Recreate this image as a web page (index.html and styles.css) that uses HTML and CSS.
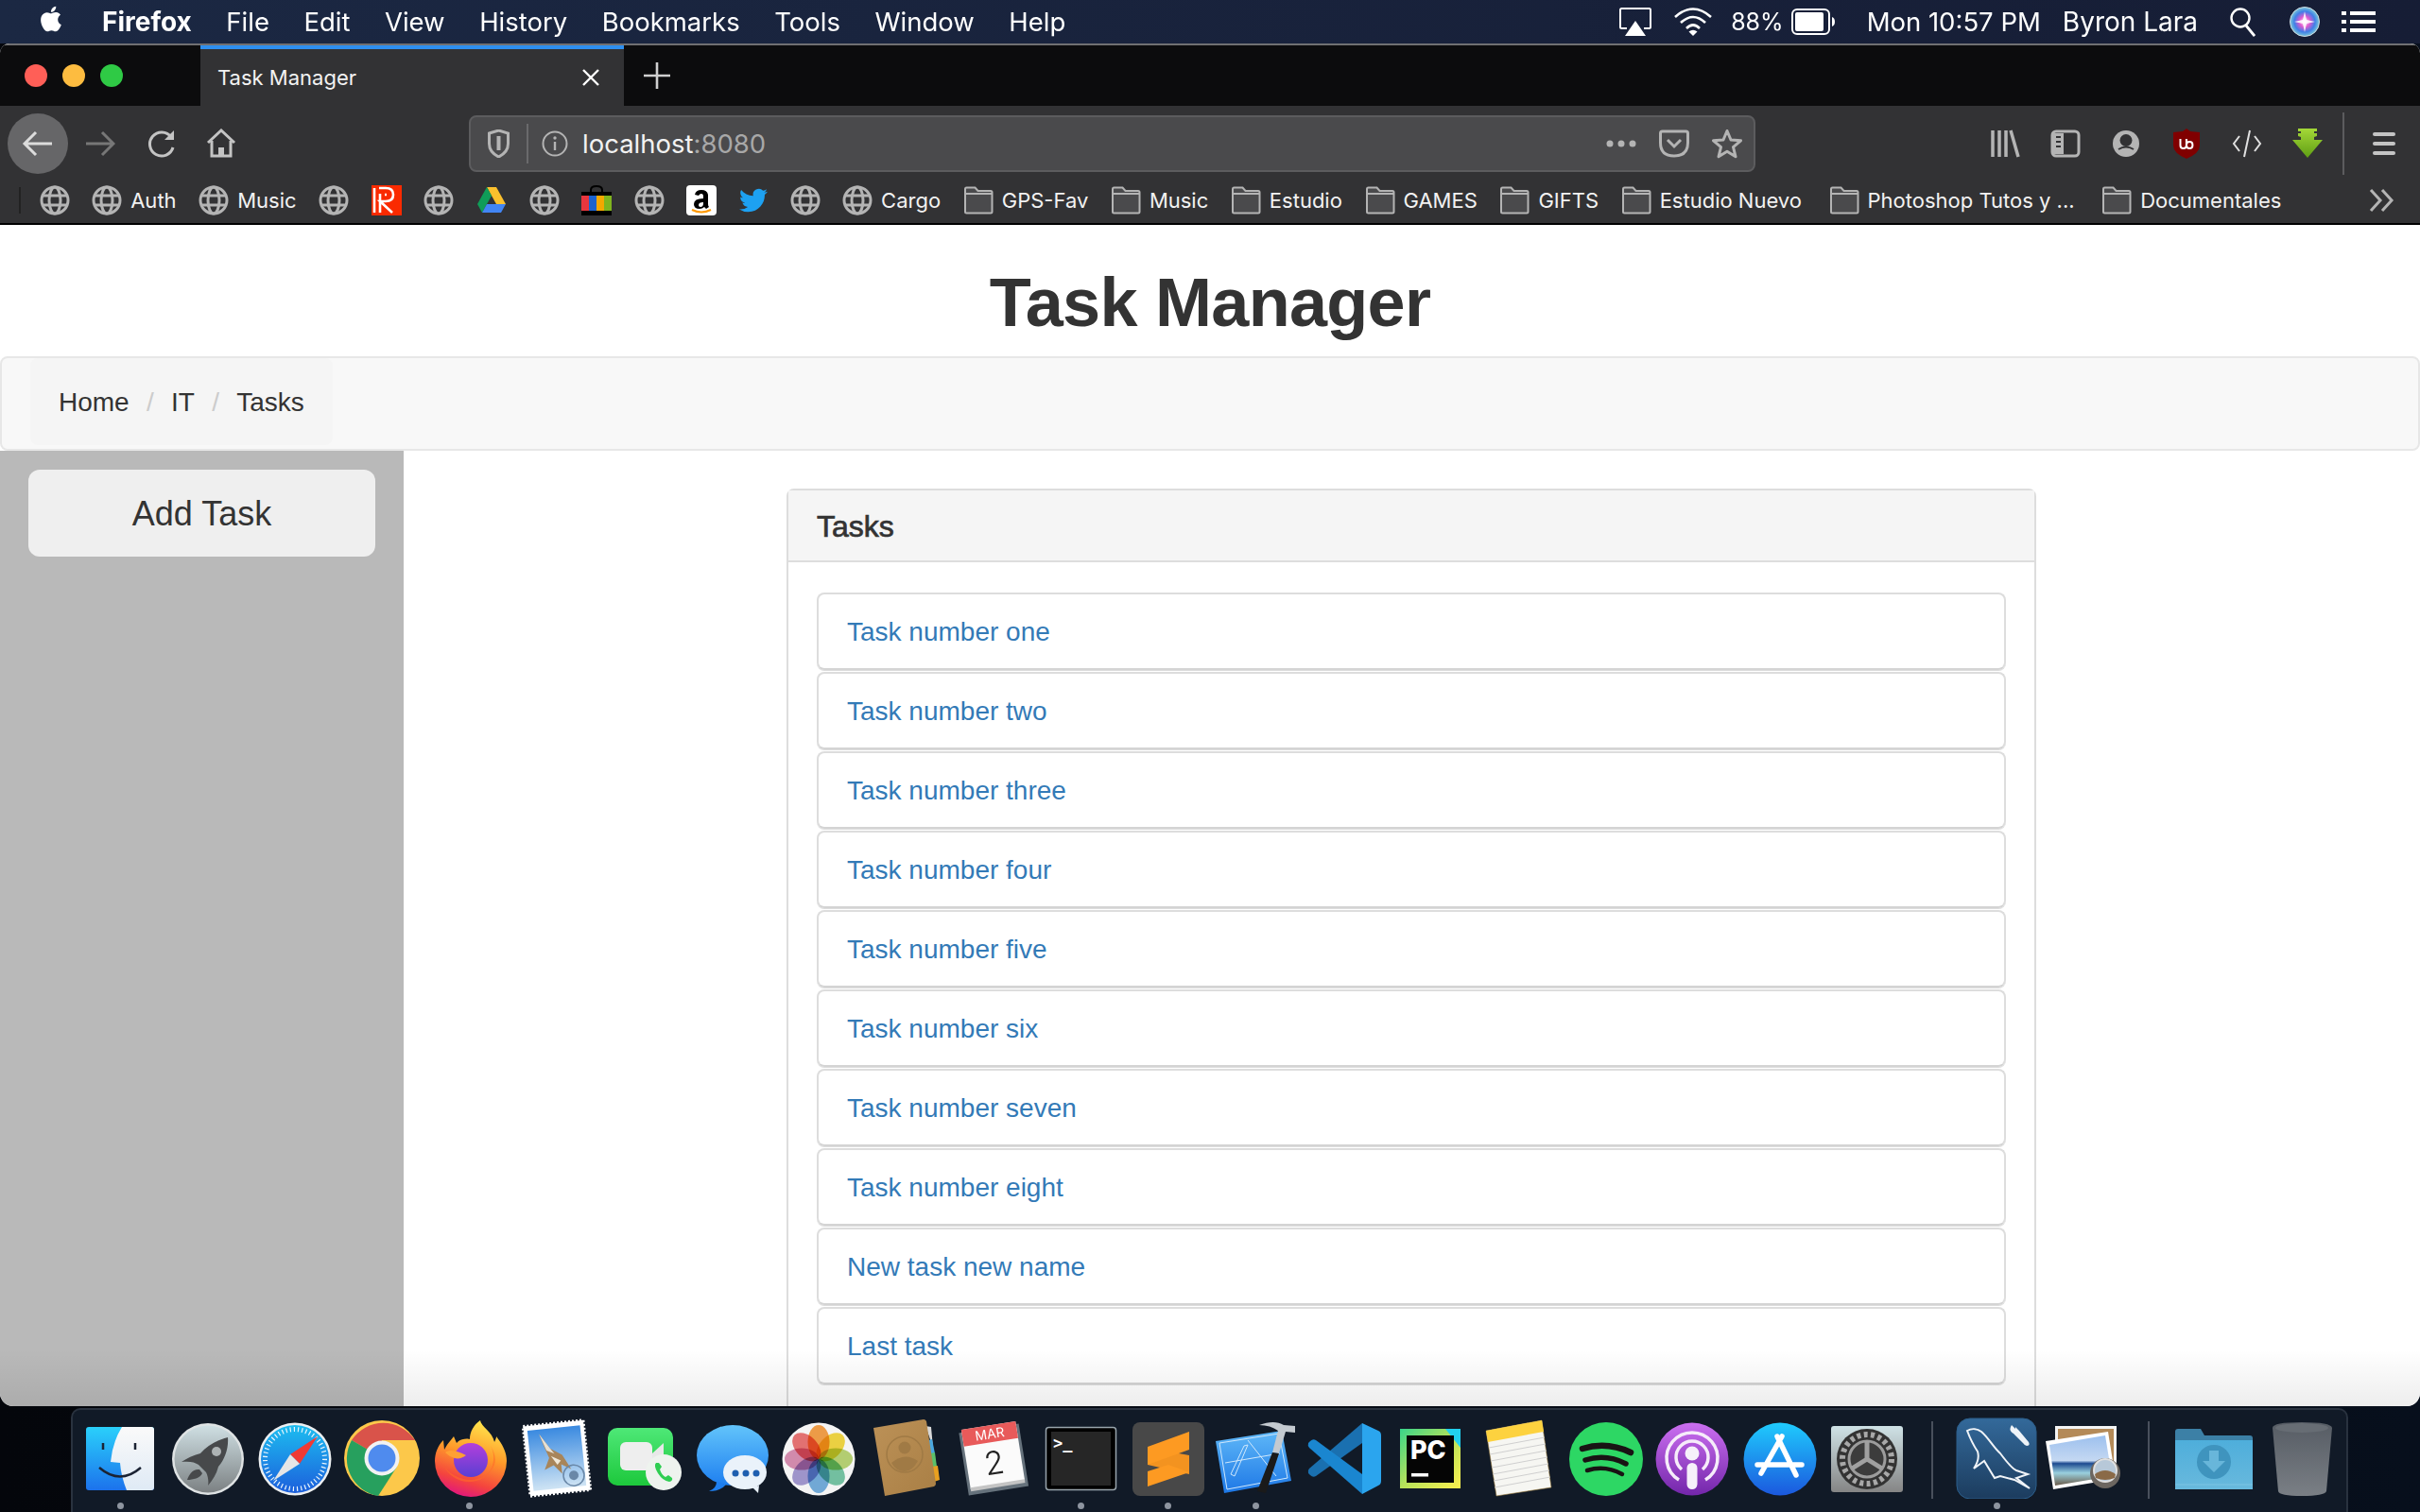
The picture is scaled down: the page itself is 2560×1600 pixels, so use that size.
FILE: index.html
```html
<!DOCTYPE html>
<html lang="en">
<head>
<meta charset="utf-8">
<title>Task Manager</title>
<link rel="stylesheet" href="styles.css">
</head>
<body>
<svg class="defs" aria-hidden="true">
  <defs>
    <symbol id="globe" viewBox="0 0 32 32"><g fill="none" stroke="#b4b4b4" stroke-width="3"><circle cx="16" cy="16" r="14"/><ellipse cx="16" cy="16" rx="6" ry="14"/><path d="M3 11h26M3 21h26"/></g></symbol>
    <symbol id="folder" viewBox="0 0 32 32"><path d="M2 4q0-1.500 1.500-1.500h9l3 3.500H29q1.500 0 1.500 1.500V28q0 1.500-1.500 1.500H3.500Q2 29.500 2 28Z" fill="#4a4a4c" stroke="#b4b4b4" stroke-width="2"/><path d="M2 9h28.500" stroke="#b4b4b4" stroke-width="2"/></symbol>
    <linearGradient id="gFinder" x1="0" y1="0" x2="0" y2="1"><stop offset="0" stop-color="#2ad0fb"/><stop offset="1" stop-color="#1c72ec"/></linearGradient>
    <linearGradient id="gFinder2" x1="0" y1="0" x2="0" y2="1"><stop offset="0" stop-color="#fafafa"/><stop offset="1" stop-color="#dfeaf5"/></linearGradient>
    <linearGradient id="gRocket" x1="0" y1="0" x2="0" y2="1"><stop offset="0" stop-color="#cfdfe3"/><stop offset="1" stop-color="#7c8183"/></linearGradient>
    <linearGradient id="gSafari" x1="0" y1="0" x2="0" y2="1"><stop offset="0" stop-color="#1dbdf0"/><stop offset="1" stop-color="#1c5fdc"/></linearGradient>
    <linearGradient id="gFox" x1="0.7" y1="0" x2="0.4" y2="1"><stop offset="0" stop-color="#ffe94e"/><stop offset=".45" stop-color="#ff9a2a"/><stop offset=".8" stop-color="#f4443e"/><stop offset="1" stop-color="#e2187c"/></linearGradient>
    <linearGradient id="gFoxIn" x1="0.5" y1="0" x2="0.5" y2="1"><stop offset="0" stop-color="#b33fdc"/><stop offset="1" stop-color="#5b3fd2"/></linearGradient>
    <linearGradient id="gSky" x1="0" y1="0" x2="0" y2="1"><stop offset="0" stop-color="#3a8ae0"/><stop offset="1" stop-color="#cfe4f4"/></linearGradient>
    <linearGradient id="gFace" x1="0" y1="0" x2="0" y2="1"><stop offset="0" stop-color="#4ee877"/><stop offset="1" stop-color="#1dc83c"/></linearGradient>
    <linearGradient id="gMsg" x1="0" y1="0" x2="0" y2="1"><stop offset="0" stop-color="#62c4fb"/><stop offset="1" stop-color="#1e7ff0"/></linearGradient>
    <linearGradient id="gBook" x1="0" y1="0" x2="1" y2="1"><stop offset="0" stop-color="#bc9157"/><stop offset="1" stop-color="#a97f45"/></linearGradient>
    <linearGradient id="gXcode" x1="0" y1="0" x2="0" y2="1"><stop offset="0" stop-color="#5fb8f8"/><stop offset="1" stop-color="#1e78e6"/></linearGradient>
    <linearGradient id="gPod" x1="0" y1="0" x2="0" y2="1"><stop offset="0" stop-color="#cb6ff0"/><stop offset="1" stop-color="#7326aa"/></linearGradient>
    <linearGradient id="gStore" x1="0" y1="0" x2="0" y2="1"><stop offset="0" stop-color="#1fcbfd"/><stop offset="1" stop-color="#1b58de"/></linearGradient>
    <linearGradient id="gPrefs" x1="0" y1="0" x2="0" y2="1"><stop offset="0" stop-color="#cfe2e6"/><stop offset="1" stop-color="#858585"/></linearGradient>
    <linearGradient id="gSql" x1="0" y1="0" x2="0" y2="1"><stop offset="0" stop-color="#33699a"/><stop offset="1" stop-color="#1c3c5e"/></linearGradient>
    <linearGradient id="gSea" x1="0" y1="0" x2="0" y2="1"><stop offset="0" stop-color="#9cc0ee"/><stop offset=".5" stop-color="#c4d8f2"/><stop offset=".56" stop-color="#1d4a90"/><stop offset=".75" stop-color="#9ad0de"/><stop offset="1" stop-color="#6a5a48"/></linearGradient>
    <linearGradient id="gFolder" x1="0" y1="0" x2="0" y2="1"><stop offset="0" stop-color="#4eaedb"/><stop offset="1" stop-color="#68b9dd"/></linearGradient>
    <linearGradient id="gTrash" x1="0" y1="0" x2="0" y2="1"><stop offset="0" stop-color="#565c64"/><stop offset="1" stop-color="#7a7f85"/></linearGradient>
    <linearGradient id="gArrow" x1="0" y1="0" x2="0" y2="1"><stop offset="0" stop-color="#a4d838"/><stop offset="1" stop-color="#5f9e14"/></linearGradient>
    <linearGradient id="gPy" x1="0" y1="0" x2="1" y2="1"><stop offset="0" stop-color="#38d58a"/><stop offset=".5" stop-color="#b6e25a"/><stop offset="1" stop-color="#fdf04e"/></linearGradient>
    <radialGradient id="gSiri"><stop offset="0" stop-color="#ffffff"/><stop offset=".35" stop-color="#e05ad0"/><stop offset=".7" stop-color="#3f7fe8"/><stop offset="1" stop-color="#7ac8d8"/></radialGradient>
  </defs>
</svg>

<header class="menubar">
  <svg class="apple" viewBox="0 0 24 24"><path fill="#fff" d="M18.710 19.500c-.83 1.240-1.710 2.450-3.050 2.470-1.340.03-1.770-.79-3.290-.79-1.530 0-2 .77-3.270.82-1.310.05-2.300-1.320-3.140-2.530C4.250 17 2.940 12.450 4.700 9.390c.87-1.520 2.430-2.480 4.120-2.510 1.280-.02 2.500.87 3.290.87.78 0 2.260-1.070 3.800-.91.65.03 2.470.26 3.640 1.980-.09.06-2.170 1.280-2.150 3.810.03 3.020 2.650 4.030 2.680 4.040-.03.07-.42 1.440-1.380 2.830M13 3.500c.73-.83 1.940-1.460 2.940-1.500.13 1.170-.34 2.350-1.040 3.190-.69.85-1.830 1.510-2.950 1.420-.15-1.150.41-2.350 1.050-3.110z"/></svg>
  <nav class="appmenu">
    <span class="appname">Firefox</span><span>File</span><span>Edit</span><span>View</span><span>History</span><span>Bookmarks</span><span>Tools</span><span>Window</span><span>Help</span>
  </nav>
  <div class="status">
    <svg class="st-airplay" width="36" height="32" viewBox="0 0 36 32"><path d="M9 23H3.500Q2 23 2 21.500V3.500Q2 2 3.500 2h29Q34 2 34 3.500v18q0 1.500-1.500 1.500H27" fill="none" stroke="#fff" stroke-width="2"/><path d="M18 15 29 31H7Z" fill="#fff"/></svg>
    <svg class="st-wifi" width="42" height="32" viewBox="0 0 42 32"><g fill="none" stroke="#fff" stroke-width="2.600"><path d="M2 11Q21-6 40 11"/><path d="M8 17Q21 5 34 17"/><path d="M14 23Q21 16 28 23"/></g><path d="M21 31 16.500 26.500Q21 23 25.500 26.500Z" fill="#fff"/></svg>
    <span class="st-pct">88%</span>
    <svg class="st-batt" width="46" height="28" viewBox="0 0 46 28"><rect x="1" y="1" width="39" height="26" rx="5" fill="none" stroke="#fff" stroke-width="2"/><rect x="4" y="4" width="30" height="20" rx="2" fill="#fff"/><path d="M43 9q3 1 3 5t-3 5Z" fill="#fff"/></svg>
    <span class="st-time">Mon 10:57 PM</span>
    <span class="st-name">Byron Lara</span>
    <svg class="st-search" width="28" height="32" viewBox="0 0 28 32"><circle cx="12" cy="12" r="9.500" fill="none" stroke="#fff" stroke-width="2.400"/><path d="M18 20 27 31" stroke="#fff" stroke-width="2.800"/></svg>
    <svg class="st-siri" width="32" height="32" viewBox="0 0 32 32"><circle cx="16" cy="16" r="15.500" fill="url(#gSiri)" stroke="#cfd8e0" stroke-width="1"/><path d="M16 5 18 14 27 16 18 18 16 27 14 18 5 16 14 14Z" fill="#fff" opacity=".85"/></svg>
    <svg width="36" height="24" viewBox="0 0 36 24"><g fill="#fff"><rect x="0" y="1" width="5" height="4"/><rect x="9" y="1" width="27" height="4"/><rect x="0" y="10" width="5" height="4"/><rect x="9" y="10" width="27" height="4"/><rect x="0" y="19" width="5" height="4"/><rect x="9" y="19" width="27" height="4"/></g></svg>
  </div>
</header>

<div class="window">
  <div class="tabstrip">
    <div class="lights"><i class="light red"></i><i class="light amber"></i><i class="light green"></i></div>
    <div class="tab"><span class="tab-title">Task Manager</span>
      <svg width="20" height="20" viewBox="0 0 20 20"><path d="M2 2 18 18M18 2 2 18" stroke="#fff" stroke-width="2.400"/></svg>
    </div>
    <svg class="newtab" width="28" height="28" viewBox="0 0 28 28"><path d="M14 0V28M0 14H28" stroke="#cfcfcf" stroke-width="2.600"/></svg>
  </div>

  <div class="navrow">
    <div class="backbtn"><svg width="34" height="30" viewBox="0 0 34 30"><path d="M32 15H4M15 3 3 15 15 27" fill="none" stroke="#dcdcdc" stroke-width="3"/></svg></div>
    <svg class="nav-fwd" width="32" height="30" viewBox="0 0 32 30"><path d="M1 15H29M18 3 30 15 18 27" fill="none" stroke="#777" stroke-width="3"/></svg>
    <svg class="nav-reload" width="30" height="30" viewBox="0 0 30 30"><path d="M25 8A12.500 12.500 0 1 0 27 19" fill="none" stroke="#c4c4c4" stroke-width="3"/><path d="M28 1V11H18Z" fill="#c4c4c4"/></svg>
    <svg class="nav-home" width="32" height="32" viewBox="0 0 32 32"><path d="M2 15 16 2 30 15M6 13V29H26V13" fill="none" stroke="#c4c4c4" stroke-width="3"/><path d="M13 30V20h6V30Z" fill="#c4c4c4"/></svg>
    <div class="urlbar">
      <svg width="23" height="30" viewBox="0 0 23 30"><path d="M1.500 4 11.500 1l10 3v11q0 9-10 14-10-5-10-14Z" fill="none" stroke="#b4b4b4" stroke-width="3"/><path d="M11.500 7v15" stroke="#b4b4b4" stroke-width="4"/></svg>
      <i class="url-sep"></i>
      <svg width="28" height="28" viewBox="0 0 28 28"><circle cx="14" cy="14" r="12.500" fill="none" stroke="#b4b4b4" stroke-width="2"/><path d="M14 12v9" stroke="#b4b4b4" stroke-width="2.400"/><circle cx="14" cy="8" r="1.700" fill="#b4b4b4"/></svg>
      <span class="url-text">localhost<span class="url-port">:8080</span></span>
      <div class="url-actions">
        <svg width="32" height="8" viewBox="0 0 32 8"><g fill="#b4b4b4"><circle cx="4" cy="4" r="3.500"/><circle cx="16" cy="4" r="3.500"/><circle cx="28" cy="4" r="3.500"/></g></svg>
        <svg width="32" height="30" viewBox="0 0 32 30"><path d="M3.500 2h25Q30.500 2 30.500 4v10q0 14-14.500 14T1.500 14V4Q1.500 2 3.500 2Z" fill="none" stroke="#b4b4b4" stroke-width="3"/><path d="M9 11l7 7 7-7" fill="none" stroke="#b4b4b4" stroke-width="3"/></svg>
        <svg width="32" height="32" viewBox="0 0 32 32"><path d="M16 2.500 20 12l10.500.8-8 6.800 2.500 10.200L16 24.300 7 29.800l2.500-10.200-8-6.800L12 12Z" fill="none" stroke="#b4b4b4" stroke-width="3" stroke-linejoin="round"/></svg>
      </div>
    </div>
    <div class="tools">
      <svg width="32" height="30" viewBox="0 0 32 30"><path d="M3 1V29M10 1V29M17 1V29M22 1 30 29" stroke="#b4b4b4" stroke-width="3.500" fill="none"/></svg>
      <svg width="32" height="30" viewBox="0 0 32 30"><rect x="2" y="2" width="28" height="26" rx="4" fill="none" stroke="#b4b4b4" stroke-width="3"/><path d="M2 4h12v22H2Z" fill="#b4b4b4"/><path d="M6 8h5M6 13h5M6 18h5" stroke="#323234" stroke-width="2"/></svg>
      <svg width="32" height="32" viewBox="0 0 32 32"><circle cx="16" cy="16" r="14" fill="#b4b4b4"/><circle cx="16" cy="12.500" r="6.500" fill="#323234"/><path d="M5 24q11-10 22 0-5 5-11 5T5 24Z" fill="#b4b4b4"/><path d="M8 22q8-5 16 0" fill="none" stroke="#323234" stroke-width="2"/></svg>
      <svg width="32" height="32" viewBox="0 0 32 32"><path d="M16 0 20 3l10 1v14q0 8-14 14Q2 26 2 18V4l10-1Z" fill="#800000"/><path d="M9.500 11v7q0 3 3.200 3t3.200-3v-7M16 18q0 3 3.200 3t3.200-3v-1q0-3-3.200-3T16 17" fill="none" stroke="#fff" stroke-width="2"/></svg>
      <svg width="32" height="30" viewBox="0 0 32 30"><path d="M8 7 2 15l6 8M24 7l6 8-6 8M19 1l-6 28" fill="none" stroke="#e0e0e0" stroke-width="2"/></svg>
      <svg width="32" height="32" viewBox="0 0 32 32"><path d="M6 0h20v3h-3v2h3v3l-3 1v3h9L16 31 0 12h9V9L6 8V5h3V3H6Z" fill="url(#gArrow)"/></svg>
    </div>
    <i class="tool-sep"></i>
    <svg class="burger" width="24" height="24" viewBox="0 0 24 24"><g fill="#c4c4c4"><rect y="0" width="24" height="4" rx="2"/><rect y="10" width="24" height="4" rx="2"/><rect y="20" width="24" height="4" rx="2"/></g></svg>
  </div>

  <div class="bookmarks">
    <i class="bm-sep"></i>
    <div class="bm"><svg class="ic"><use href="#globe"/></svg></div>
    <div class="bm"><svg class="ic"><use href="#globe"/></svg><span>Auth</span></div>
    <div class="bm"><svg class="ic"><use href="#globe"/></svg><span>Music</span></div>
    <div class="bm"><svg class="ic"><use href="#globe"/></svg></div>
    <div class="bm"><svg class="ic" viewBox="0 0 32 32"><rect width="32" height="32" fill="#fa2a00"/><path d="M3 3v26M8 3h7q8 0 8 7t-8 7H9l13 12M14 10h2M9 9v20" fill="none" stroke="#fff" stroke-width="2.600"/></svg></div>
    <div class="bm"><svg class="ic"><use href="#globe"/></svg></div>
    <div class="bm"><svg class="ic" viewBox="0 0 32 32"><path d="M11 2h10l10 18H21Z" fill="#fbc02d"/><path d="M11 2 1 20l5 9 10-18Z" fill="#0f9d58"/><path d="M6 29h20l5-9H11Z" fill="#4285f4"/></svg></div>
    <div class="bm"><svg class="ic"><use href="#globe"/></svg></div>
    <div class="bm"><svg class="ic" viewBox="0 0 32 32"><path d="M10 8V5q0-4 6-4t6 4v3" fill="none" stroke="#000" stroke-width="2"/><rect y="7" width="32" height="25" fill="#000"/><rect y="11" width="8" height="16" fill="#e8363e"/><rect x="8" y="11" width="8" height="16" fill="#1b63d0"/><rect x="16" y="11" width="8" height="16" fill="#f4a800"/><rect x="24" y="11" width="8" height="16" fill="#7fb41e"/></svg></div>
    <div class="bm"><svg class="ic"><use href="#globe"/></svg></div>
    <div class="bm"><svg class="ic" viewBox="0 0 32 32"><rect width="32" height="32" rx="4" fill="#fff"/><path d="M9 10q1-5 7-5t7 5v10q0 2 1 3l-3 2-2-2q-2 2-5 2-6 0-6-5 0-6 10-6v-2q0-3-2-3t-3 2Zm9 8q-5 0-5 3 0 2 2 2 3 0 3-4Z" fill="#000"/><path d="M6 26q10 5 20 0" fill="none" stroke="#f90" stroke-width="2"/></svg></div>
    <div class="bm"><svg class="ic ic-tw" viewBox="0 0 24 24"><path fill="#1da1f2" d="M23.950 4.570a10 10 0 0 1-2.820.77 4.960 4.960 0 0 0 2.160-2.720c-.95.550-2 .96-3.130 1.190a4.920 4.920 0 0 0-8.380 4.480C7.690 8.090 4.070 6.130 1.640 3.160a4.820 4.820 0 0 0-.67 2.480c0 1.710.87 3.210 2.190 4.100a4.900 4.900 0 0 1-2.230-.62v.06a4.920 4.920 0 0 0 3.950 4.830 5 5 0 0 1-2.210.08 4.940 4.940 0 0 0 4.600 3.420A9.870 9.870 0 0 1 0 19.540a14 14 0 0 0 7.560 2.210c9.050 0 14-7.500 14-13.980 0-.21 0-.42-.02-.63A9.940 9.940 0 0 0 24 4.590Z"/></svg></div>
    <div class="bm"><svg class="ic"><use href="#globe"/></svg></div>
    <div class="bm"><svg class="ic"><use href="#globe"/></svg><span>Cargo</span></div>
    <div class="bm"><svg class="ic"><use href="#folder"/></svg><span>GPS-Fav</span></div>
    <div class="bm"><svg class="ic"><use href="#folder"/></svg><span>Music</span></div>
    <div class="bm"><svg class="ic"><use href="#folder"/></svg><span>Estudio</span></div>
    <div class="bm"><svg class="ic"><use href="#folder"/></svg><span>GAMES</span></div>
    <div class="bm"><svg class="ic"><use href="#folder"/></svg><span>GIFTS</span></div>
    <div class="bm"><svg class="ic"><use href="#folder"/></svg><span>Estudio Nuevo</span></div>
    <div class="bm bm-wide"><svg class="ic"><use href="#folder"/></svg><span>Photoshop Tutos y ...</span></div>
    <div class="bm bm-wide"><svg class="ic"><use href="#folder"/></svg><span>Documentales</span></div>
    <svg class="bm-more" width="28" height="26" viewBox="0 0 28 26"><path d="M2 2 12 13 2 24M14 2 24 13 14 24" fill="none" stroke="#b4b4b4" stroke-width="3"/></svg>
  </div>

  <main class="page">
    <h1 class="title">Task Manager</h1>
    <div class="navbar">
      <ol class="breadcrumb">
        <li>Home</li>
        <li class="crumb">IT</li>
        <li class="crumb">Tasks</li>
      </ol>
    </div>
    <div class="columns">
      <aside class="sidebar"><div class="addbtn">Add Task</div></aside>
      <section class="content">
        <div class="panel">
          <div class="panel-head">Tasks</div>
          <div class="panel-body">
            <a class="task">Task number one</a>
            <a class="task">Task number two</a>
            <a class="task">Task number three</a>
            <a class="task">Task number four</a>
            <a class="task">Task number five</a>
            <a class="task">Task number six</a>
            <a class="task">Task number seven</a>
            <a class="task">Task number eight</a>
            <a class="task">New task new name</a>
            <a class="task">Last task</a>
          </div>
        </div>
      </section>
    </div>
    <div class="fade"></div>
  </main>
</div>

<footer class="dock">
  <div class="slot"><svg class="di" viewBox="0 0 92 86"><rect x="10" y="10" width="72" height="67" rx="3" fill="url(#gFinder)"/><path d="M48 10H79q3 0 3 3V74q0 3-3 3H53Q47 62 46 48L36 47Q38 26 48 10Z" fill="url(#gFinder2)"/><path d="M28 27v7M62 27v7" stroke="#1b2333" stroke-width="2.500"/><path d="M24 53Q46 72 68 53" fill="none" stroke="#1b2333" stroke-width="2.500"/></svg><i class="dot"></i></div>
  <div class="slot"><svg class="di" viewBox="0 0 92 86"><circle cx="46" cy="44" r="38" fill="#dfe3e4"/><circle cx="46" cy="44" r="35.500" fill="url(#gRocket)"/><path d="M67 21C55 24 45 30 38 38 30 40 24 43 18 47 26 46 32 47 36 50L44 58C46 62 47 68 46 72 51 66 55 60 57 52 64 44 68 32 67 21Z" fill="#47494b"/><circle cx="55" cy="36" r="5" fill="#adb3b4"/><path d="M37 55C30 54 26 60 24 66 30 66 38 64 40 59Z" fill="#47494b"/></svg></div>
  <div class="slot"><svg class="di" viewBox="0 0 92 86"><circle cx="46" cy="44" r="38.500" fill="#eceff1"/><circle cx="46" cy="44" r="36" fill="url(#gSafari)"/><circle cx="46" cy="44" r="31.500" fill="none" stroke="#e8f4fc" stroke-width="5" stroke-dasharray="1.200 3"/><path d="M70 20 51 49 41 39Z" fill="#f03a35"/><path d="M23 67 51 49 41 39Z" fill="#e6e6e6"/></svg></div>
  <div class="slot"><svg class="di" viewBox="0 0 92 86"><circle cx="46" cy="43" r="40" fill="#fcc84a"/><path d="M46 43 14 24A40 40 0 0 1 81 24L46 24Z" fill="#d9534a"/><path d="M14 24A40 40 0 0 0 42 83L62 52Z" fill="#27a05e"/><circle cx="46" cy="43" r="18.500" fill="#f2f2f2"/><circle cx="46" cy="43" r="14.500" fill="#4f8bee"/></svg></div>
  <div class="slot"><svg class="di" viewBox="0 0 92 86"><path d="M57 3C58 10 70 15 72 26 74 22 74 21 74 20 80 28 85 36 85 46A38 38 0 0 1 9 46C9 38 12 30 18 24L19 34C22 28 26 24 29 20L32 27C36 22 44 22 46 23 46 15 50 8 57 3Z" fill="url(#gFox)"/><path d="M68 30C74 40 72 60 56 66 40 72 24 64 18 50 26 66 60 76 72 50 74 44 72 36 68 30Z" fill="#ff6a2a" opacity=".6"/><circle cx="47" cy="45" r="18" fill="url(#gFoxIn)"/><path d="M20 37C26 33 34 36 42 40 38 43 34 44 30 43 26 42 23 40 20 37Z" fill="#ffa033"/></svg><i class="dot"></i></div>
  <div class="slot"><svg class="di" viewBox="0 0 92 86"><g transform="rotate(-6 46 43)"><rect x="14" y="6" width="64" height="74" fill="#fff" stroke="#fff" stroke-width="3" stroke-dasharray="2 2"/><rect x="18" y="11" width="56" height="64" fill="url(#gSky)"/><path d="M30 16 40 32 52 40 60 56 50 50 50 60 42 50 32 54 38 42 34 30Z" fill="#a8855a"/><path d="M30 16 40 32 44 38 36 34Z" fill="#e6e0d4"/><path d="M40 40 50 46 46 50Z" fill="#f0e8d8"/><circle cx="62" cy="63" r="11" fill="none" stroke="#6a88a8" stroke-width="1.500"/><circle cx="62" cy="63" r="5" fill="#6a88a8"/></g></svg></div>
  <div class="slot"><svg class="di" viewBox="0 0 92 86"><rect x="7" y="11" width="69" height="61" rx="10" fill="url(#gFace)"/><rect x="20" y="26" width="34" height="30" rx="6" fill="#eeeeee"/><path d="M54 38 66 27V52L54 44Z" fill="#e8e8e8"/><circle cx="66" cy="58" r="19" fill="#eef3ee"/><path d="M58 48Q55 51 60 59T72 68Q76 67 75 64L71 61 68 63Q64 61 62 55L64 52 61 48Z" fill="#2fce52"/></svg></div>
  <div class="slot"><svg class="di" viewBox="0 0 92 86"><ellipse cx="47" cy="40" rx="38" ry="32" fill="url(#gMsg)"/><path d="M30 68Q30 75 22 78 34 78 40 71Z" fill="#1e7ff0"/><ellipse cx="60" cy="58" rx="23" ry="18" fill="#eaf2fa"/><path d="M68 74 74 80 75 72Z" fill="#eaf2fa"/><g fill="#1f5fb0"><circle cx="50" cy="59" r="3.500"/><circle cx="61" cy="59" r="3.500"/><circle cx="72" cy="59" r="3.500"/></g></svg></div>
  <div class="slot"><svg class="di" viewBox="0 0 92 86"><circle cx="46" cy="44" r="38.500" fill="#f4f4f4"/><g class="petals"><ellipse cx="46" cy="26" rx="11.500" ry="18" fill="#f79a3a"/><ellipse cx="46" cy="26" rx="11.500" ry="18" fill="#f5d735" transform="rotate(45 46 44)"/><ellipse cx="46" cy="26" rx="11.500" ry="18" fill="#b5d46a" transform="rotate(90 46 44)"/><ellipse cx="46" cy="26" rx="11.500" ry="18" fill="#6cc3a0" transform="rotate(135 46 44)"/><ellipse cx="46" cy="26" rx="11.500" ry="18" fill="#6aa9dd" transform="rotate(180 46 44)"/><ellipse cx="46" cy="26" rx="11.500" ry="18" fill="#9d93cf" transform="rotate(225 46 44)"/><ellipse cx="46" cy="26" rx="11.500" ry="18" fill="#d887ae" transform="rotate(270 46 44)"/><ellipse cx="46" cy="26" rx="11.500" ry="18" fill="#ec6a6a" transform="rotate(315 46 44)"/></g></svg></div>
  <div class="slot"><svg class="di" viewBox="0 0 92 86"><path d="M66 9 72 10 74 32Z" fill="#d8d8d8"/><path d="M69 24 73 23 76 38 71 39Z" fill="#4aa8e0"/><path d="M71 38 76 37 78 52 73 53Z" fill="#5ac06a"/><path d="M73 52 79 51 81 66 75 68Z" fill="#e8a020"/><path d="M11 11 64 2Q66 2 67 4L77 70Q77 72 75 73L23 83Z" fill="url(#gBook)"/><circle cx="44" cy="39" r="19" fill="none" stroke="#a07a45" stroke-width="1.500"/><circle cx="44" cy="32" r="6.500" fill="#a07a45"/><path d="M30 48Q44 36 58 46 52 57 44 57 35 57 30 48Z" fill="#a07a45"/></svg></div>
  <div class="slot"><svg class="di" viewBox="0 0 92 86"><g transform="rotate(-9 46 43)"><rect x="14" y="11" width="64" height="67" fill="#66727c"/><rect x="17" y="8" width="58" height="64" fill="#fbfbfb"/><rect x="17" y="8" width="58" height="18" fill="#e85a5a"/><text class="cal-month" x="46" y="22">MAR</text><text class="cal-day" x="46" y="60">2</text><rect x="17" y="70" width="58" height="4" fill="#c4c4c4"/></g></svg></div>
  <div class="slot"><svg class="di" viewBox="0 0 92 86"><rect x="9.500" y="10.500" width="74" height="66" rx="3" fill="#000" stroke="#98a4ac" stroke-width="1.500"/><rect x="15" y="15" width="63" height="57" fill="#262626"/><text class="term" x="17" y="33">&gt;_</text></svg><i class="dot"></i></div>
  <div class="slot"><svg class="di" viewBox="0 0 92 86"><rect x="8" y="5" width="76" height="78" rx="8" fill="#484848"/><path d="M24 32 68 40V60L24 50Z" fill="#f39320"/><path d="M24 31 68 15V34L24 50Z" fill="#fd9a22"/><path d="M24 57 46 50 68 58 24 73Z" fill="#fd9a22"/></svg><i class="dot"></i></div>
  <div class="slot"><svg class="di" viewBox="0 0 92 86"><path d="M4 25 74 14 84 67 13 80Z" fill="url(#gXcode)"/><path d="M8 27 71 17 80 64 16 76ZM20 60 34 30 38 29 24 62ZM14 48 72 38M38 24 68 62" fill="none" stroke="#cfe8fc" stroke-width="1"/><path d="M50 8Q66 2 76 8L88 9 88 16 78 15 71 38 64 37 70 14Q62 8 50 8Z" fill="#c4cad0"/><path d="M64 37 71 38 57 80 48 78Z" fill="#1a1a1a"/></svg><i class="dot"></i></div>
  <div class="slot"><svg class="di" viewBox="0 0 92 86"><path d="M66 6V27L17 62Q14 64 11 61L9 59Q8 56 10 54Z" fill="#1a70b0"/><path d="M66 81V60L17 24Q14 22 11 25L9 27Q8 30 10 32Z" fill="#1a86d0"/><path d="M66 6 83 14Q86 15 86 19V67Q86 71 83 72L66 81Z" fill="#2ba5ee"/></svg></div>
  <div class="slot"><svg class="di" viewBox="0 0 92 86"><rect x="14" y="12" width="64" height="63" fill="url(#gPy)"/><path d="M62 12H78V32Z" fill="#21d0ef"/><rect x="21" y="19" width="50" height="50" fill="#050505"/><text class="py" x="25" y="44">PC</text><rect x="26" y="59" width="18" height="3.500" fill="#fff"/></svg></div>
  <div class="slot"><svg class="di" viewBox="0 0 92 86"><path d="M13 14 72 3 82 74 24 83Z" fill="#f6f6f2" stroke="#9a7a3a" stroke-width=".6"/><path d="M13 14 72 3 74 15 15 26Z" fill="#fdd23f"/><g stroke="#cfcfcf" stroke-width="1"><path d="M16 32 75 21M17 39 76 28M18 46 77 35M19 53 78 42M20 60 79 49M21 67 80 56M22 74 81 63"/></g></svg></div>
  <div class="slot"><svg class="di" viewBox="0 0 92 86"><circle cx="47" cy="44" r="39" fill="#2dd764"/><g fill="none" stroke="#191414" stroke-linecap="round"><path d="M22 33Q48 25 73 37" stroke-width="6.500"/><path d="M25 45Q47 38 68 49" stroke-width="5.500"/><path d="M27 56Q46 50 64 60" stroke-width="4.500"/></g></svg></div>
  <div class="slot"><svg class="di" viewBox="0 0 92 86"><circle cx="46" cy="44" r="38.500" fill="url(#gPod)"/><g fill="none" stroke="#f6ecfa" stroke-width="3.500"><path d="M32 66A27 27 0 1 1 60 66"/><path d="M35 55A17 17 0 1 1 57 55"/></g><circle cx="46" cy="38" r="7.500" fill="#f6f0fa"/><rect x="40.500" y="48" width="11" height="28" rx="5.500" fill="#f6f0fa"/></svg></div>
  <div class="slot"><svg class="di" viewBox="0 0 92 86"><circle cx="46" cy="44" r="38.500" fill="url(#gStore)"/><path d="M48 20 26 59M43 20 63 61M22 50H69" stroke="#fff" stroke-width="5.500" stroke-linecap="round"/></svg></div>
  <div class="slot"><svg class="di" viewBox="0 0 92 86"><rect x="8" y="9" width="76" height="70" rx="3" fill="url(#gPrefs)"/><circle cx="46" cy="44" r="32" fill="#333"/><circle cx="46" cy="44" r="26" fill="none" stroke="#a8a8a8" stroke-width="6" stroke-dasharray="4 3.400"/><circle cx="46" cy="44" r="19" fill="#3c3c3c" stroke="#9c9c9c" stroke-width="3"/><path d="M46 44V25M46 44 30 54M46 44 62 54" stroke="#a0a0a0" stroke-width="5"/></svg></div>
  <i class="dock-sep"></i>
  <div class="slot"><svg class="di" viewBox="0 0 92 86"><rect x="4" y="1" width="84" height="85" rx="14" fill="url(#gSql)" stroke="#2c5f8c"/><path d="M15 14C20 11 26 12 30 15 38 22 43 32 50 38 56 46 62 54 67 56L79 60 67 64 81 75 65 66 50 62 44 64 33 46 22 54C26 48 28 42 26 36 22 30 18 22 15 14Z" fill="none" stroke="#f0f4f8" stroke-width="2"/><path d="M66 10 70 14 80 26Q82 30 78 30 76 30 74 27L64 17Q58 14 62 8L66 12Z" fill="#eef3f8"/></svg><i class="dot"></i></div>
  <div class="slot"><svg class="di" viewBox="0 0 92 86"><rect x="15" y="9" width="65" height="56" fill="#f4f4f4"/><rect x="18" y="12" width="59" height="50" fill="#b48a58"/><path d="M5 25 71 15 79 65 13 76Z" fill="#fff"/><path d="M9 29 68 19 75 62 15 72Z" fill="url(#gSea)"/><circle cx="68" cy="59" r="16" fill="#6c6660"/><circle cx="68" cy="56" r="12" fill="#b7c8d8" stroke="#e0e0e0" stroke-width="2"/><path d="M57 60Q68 52 79 60L78 64Q68 68 58 64Z" fill="#8a6a48"/></svg></div>
  <i class="dock-sep"></i>
  <div class="slot"><svg class="di" viewBox="0 0 92 86"><path d="M5 76V15Q5 12 8 12H32L36 19H84Q87 19 87 22V76Z" fill="#3c80a6"/><path d="M5 24H87V76H5Z" fill="url(#gFolder)"/><path d="M5 71H87" stroke="#7cc4e4" stroke-width="1"/><circle cx="46" cy="47" r="18" fill="#3f94be"/><path d="M41 35H51V46H58L46 58 34 46H41Z" fill="#68b6da"/></svg></div>
  <div class="slot"><svg class="di" viewBox="0 0 92 86"><path d="M15 11Q15 5 46 5T78 11L72 78Q70 83 46 83T21 78Z" fill="url(#gTrash)"/><ellipse cx="46" cy="11" rx="28" ry="5" fill="#676d74"/></svg></div>
</footer>
</body>
</html>
```

FILE: styles.css
```css
* { box-sizing: border-box; }
html, body { margin: 0; padding: 0; }
body {
  width: 2560px;
  height: 1600px;
  overflow: hidden;
  background: linear-gradient(90deg, #04060b, #070f1c);
  display: flex;
  flex-direction: column;
  font-family: "Liberation Sans", Arial, sans-serif;
  color: #333;
}
.defs { position: absolute; width: 0; height: 0; }

/* menu bar */
.menubar {
  height: 46px;
  flex: none;
  display: flex;
  align-items: center;
  padding: 0 47px 0 38px;
  background: linear-gradient(90deg, #1b2843, #161d35);
  color: #fff;
  font-family: Inter, "Liberation Sans", sans-serif;
  font-size: 27.500px;
}
.apple { width: 32px; height: 36px; margin-right: 38px; margin-top: -6px; }
.appmenu { display: flex; gap: 36.500px; }
.appname { font-weight: 700; font-size: 28px; }
.status { margin-left: auto; display: flex; align-items: center; font-size: 27.500px; }
.st-airplay { margin-right: 22px; }
.st-wifi { margin-right: 19px; }
.st-pct { font-size: 25px; }
.st-batt { margin-left: 8px; margin-right: 34px; }
.st-name { font-size: 28px; margin-left: 23px; margin-right: 33px; }
.st-search { margin-right: 36px; }
.st-siri { margin-right: 23px; }

/* window chrome */
.window {
  height: 1442px;
  flex: none;
  display: flex;
  flex-direction: column;
  border-radius: 10px 10px 14px 14px;
  overflow: hidden;
  background: #fff;
  position: relative;
}
.tabstrip {
  height: 66px;
  flex: none;
  display: flex;
  align-items: center;
  background: #0c0c0d;
  border-top: 2px solid #707072;
}
.lights { width: 212px; display: flex; gap: 16px; padding-left: 26px; }
.light { width: 24px; height: 24px; border-radius: 50%; }
.red { background: #ff5f57; }
.amber { background: #fdbc40; }
.green { background: #2fca45; }
.tab {
  width: 448px;
  height: 64px;
  display: flex;
  align-items: center;
  justify-content: space-between;
  padding: 0 25px 0 18px;
  background: #323234;
  border-top: 4px solid #2e8ff0;
  color: #f2f2f2;
  font-family: Inter, "Liberation Sans", sans-serif;
  font-size: 22px;
}
.newtab { margin-left: 21px; }

.navrow {
  height: 80px;
  flex: none;
  display: flex;
  align-items: center;
  padding-left: 8px;
  background: #323234;
}
.backbtn {
  width: 64px;
  height: 64px;
  border-radius: 50%;
  background: #666668;
  display: flex;
  align-items: center;
  justify-content: center;
}
.nav-fwd { margin-left: 18px; }
.nav-reload { margin-left: 34px; }
.nav-home { margin-left: 32px; }
.urlbar {
  width: 1361px;
  height: 60px;
  margin-left: 246px;
  display: flex;
  align-items: center;
  padding: 0 12px 0 18px;
  background: #4a4a4c;
  border: 2px solid #5c5c5e;
  border-radius: 8px;
}
.url-sep { width: 2px; height: 42px; margin: 0 14px 0 18px; background: #6a6a6c; }
.url-text {
  margin-left: 15px;
  color: #f2f2f2;
  font-family: Inter, "Liberation Sans", sans-serif;
  font-size: 27.500px;
}
.url-port { color: #a8a8a8; }
.url-actions { margin-left: auto; display: flex; align-items: center; gap: 24px; }
.tools { margin-left: 248px; display: flex; align-items: center; gap: 32px; }
.tool-sep { width: 2px; height: 66px; margin-left: 21px; background: #5c5c5e; }
.burger { margin-left: 30px; }

.bookmarks {
  height: 46px;
  flex: none;
  display: flex;
  align-items: center;
  padding: 0 26px 4px 20px;
  gap: 23.600px;
  background: #323234;
  border-bottom: 2px solid #000;
  color: #f2f2f2;
  font-family: Inter, "Liberation Sans", sans-serif;
  font-size: 22px;
}
.bm-sep { width: 2px; height: 28px; margin-right: -4px; background: #222; }
.bm { display: flex; align-items: center; gap: 9px; white-space: nowrap; }
.bm-wide { margin-left: 5px; }
.ic { width: 32px; height: 32px; flex: none; }
.ic-tw { width: 30px; }
.bm-more { margin-left: auto; }

/* page */
.page {
  flex: 1;
  min-height: 0;
  display: flex;
  flex-direction: column;
  position: relative;
  overflow: hidden;
  background: #fff;
}
.title {
  margin: 43px 0 17px;
  flex: none;
  text-align: center;
  font-size: 72px;
  line-height: 79px;
  font-weight: 700;
  letter-spacing: -.7px;
}
.navbar {
  height: 100px;
  flex: none;
  padding-left: 30px;
  background: #f8f8f8;
  border: 2px solid #e7e7e7;
  border-radius: 8px;
}
.breadcrumb {
  display: inline-block;
  height: 92px;
  margin: 0;
  padding: 27px 30px 25px;
  list-style: none;
  background: #f5f5f5;
  border-radius: 8px;
  font-size: 28px;
  line-height: 40px;
}
.breadcrumb li { display: inline-block; }
.crumb::before { content: "/\00a0"; padding: 0 10.500px; color: #ccc; }
.columns { flex: 1; display: flex; min-height: 0; }
.sidebar {
  width: 427px;
  flex: none;
  padding: 20px 30px 0;
  background: #b9b9b9;
}
.addbtn {
  height: 92px;
  width: 367px;
  display: flex;
  align-items: center;
  justify-content: center;
  padding-top: 2px;
  background: #efefef;
  border-radius: 12px;
  font-size: 36px;
}
.content { flex: 1; padding: 40px 0 0 405px; }
.panel {
  width: 1322px;
  border: 2px solid #ddd;
  border-radius: 8px;
}
.panel-head {
  height: 76px;
  display: flex;
  align-items: center;
  padding: 2px 0 0 30px;
  background: #f5f5f5;
  border-bottom: 2px solid #ddd;
  font-size: 32px;
  -webkit-text-stroke: .7px #333;
}
.panel-body {
  display: flex;
  flex-direction: column;
  gap: 2px;
  padding: 32px 30px 40px;
}
.task {
  height: 82px;
  display: flex;
  align-items: center;
  padding: 2px 0 0 30px;
  border: 2px solid #ddd;
  border-bottom-color: #d4d4d4;
  border-radius: 8px;
  box-shadow: 0 1px 0 #ddd;
  color: #337ab7;
  font-size: 28px;
}
.fade {
  position: absolute;
  left: 0;
  right: 0;
  bottom: 0;
  height: 60px;
  background: linear-gradient(180deg, rgba(0,0,0,0), rgba(0,0,0,.07));
}

/* dock */
.dock {
  width: 2409px;
  height: 110px;
  margin: 2px 0 0 75px;
  padding: 8px 0 0 4px;
  flex: none;
  display: flex;
  background: #111a27;
  border: 2px solid #29323f;
  border-bottom: 0;
  border-radius: 10px 10px 0 0;
}
.slot {
  width: 92.400px;
  flex: none;
  display: flex;
  flex-direction: column;
  align-items: center;
}
.di { width: 92px; height: 86px; flex: none; }
.dot { width: 7px; height: 7px; margin-top: 4px; border-radius: 50%; background: #8e95a0; }
.dock-sep { width: 2px; height: 82px; margin: 4px 21.500px 0; background: #49505c; flex: none; }
.petals ellipse { mix-blend-mode: multiply; opacity: .92; }
.cal-month { fill: #fff; font-family: Inter, sans-serif; font-size: 14px; text-anchor: middle; }
.cal-day { fill: #222; font-family: Inter, sans-serif; font-size: 34px; font-weight: 300; text-anchor: middle; }
.term { fill: #fff; font-family: "DejaVu Sans Mono", monospace; font-size: 17px; font-weight: 700; }
.py { fill: #fff; font-family: Inter, sans-serif; font-size: 27px; font-weight: 800; }
```
